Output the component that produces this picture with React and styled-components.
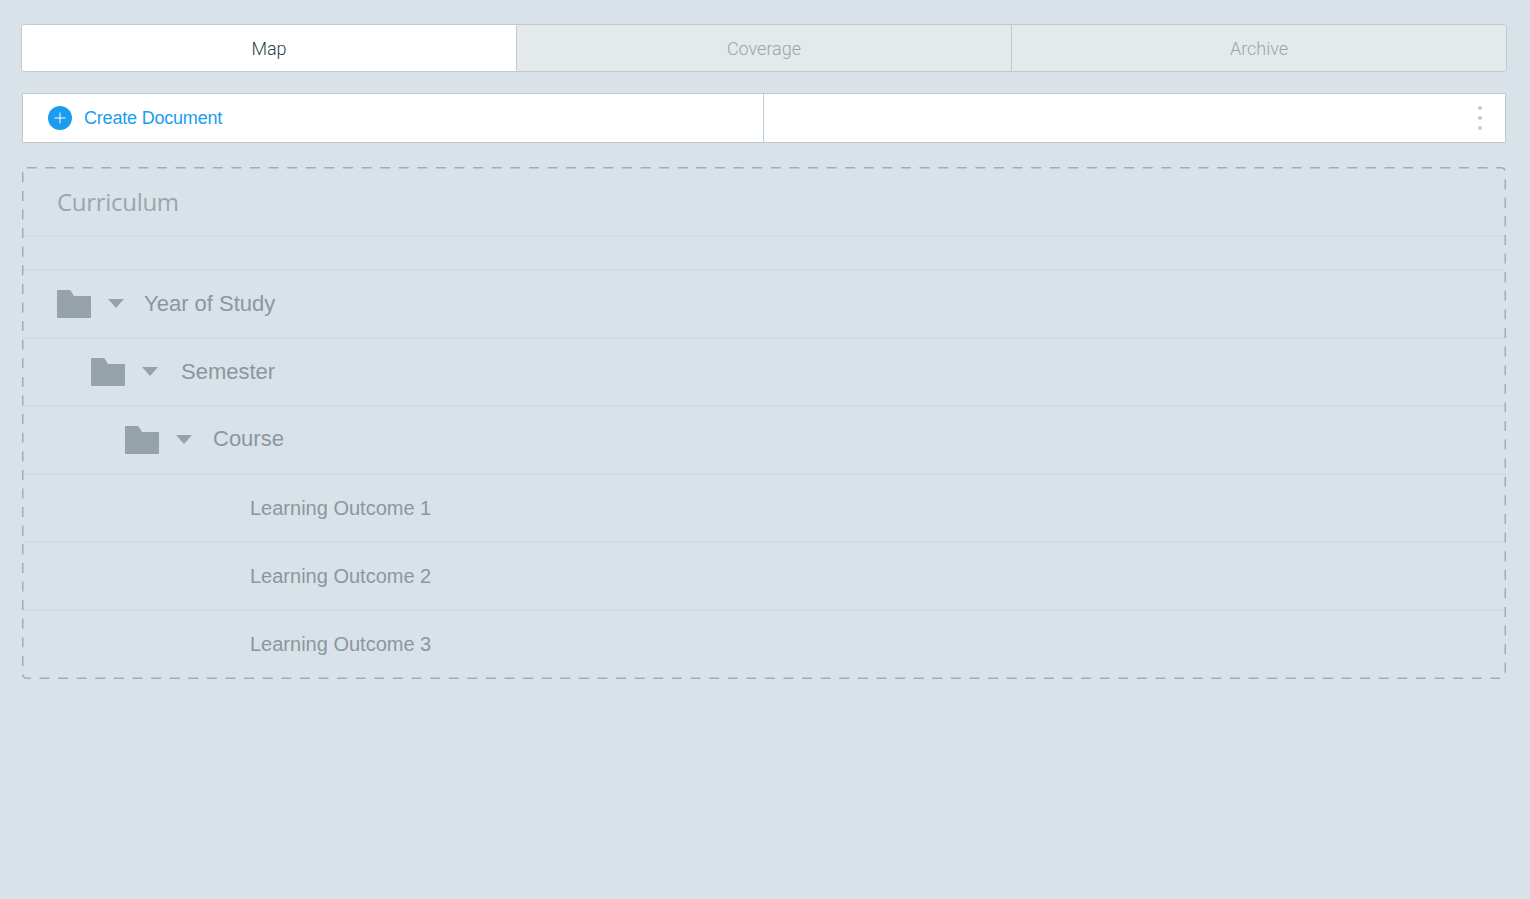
import React from "react";
import styled, { createGlobalStyle } from "styled-components";

const GlobalStyle = createGlobalStyle`
  html, body {
    margin: 0;
    padding: 0;
    background: #d9e2e9;
    font-family: "Liberation Sans", Arial, sans-serif;
  }
  * {
    box-sizing: border-box;
  }
`;

const Page = styled.div`
  min-height: 899px;
  padding: 24px 23px 0 21px;
  background: #d9e2e9;
`;

const Tabs = styled.div`
  display: flex;
  height: 48px;
  border: 1px solid #bfcad0;
  border-radius: 4px;
  overflow: hidden;
`;

const Tab = styled.div`
  flex: 1;
  display: flex;
  align-items: center;
  justify-content: center;
  font-family: Roboto, sans-serif;
  font-weight: 300;
  font-size: 18px;
  letter-spacing: 0;
  color: ${(p) => (p.$active ? "#2d3e48" : "#9aa5a9")};
  background: ${(p) => (p.$active ? "#ffffff" : "#e4eaec")};
  & + & {
    border-left: 1px solid #bfcad0;
  }
`;

const Toolbar = styled.div`
  display: flex;
  height: 50px;
  margin: 21px 0 24px 1px;
  width: 1484px;
  background: #ffffff;
  border: 1px solid #bfcad0;
`;

const ToolbarLeft = styled.div`
  width: 741px;
  display: flex;
  align-items: center;
  gap: 12px;
  padding-left: 25px;
  border-right: 1px solid #bfcad0;
`;

const ToolbarRight = styled.div`
  flex: 1;
  display: flex;
  align-items: center;
  justify-content: flex-end;
  padding-right: 23px;
`;

const PlusCircle = styled.svg`
  width: 24px;
  height: 24px;
  flex: none;
`;

const CreateLabel = styled.span`
  font-size: 18px;
  color: #1b9cef;
  letter-spacing: -0.2px;
`;

const Dots = styled.div`
  display: flex;
  flex-direction: column;
  gap: 6px;
`;

const Dot = styled.span`
  width: 4px;
  height: 4px;
  border-radius: 50%;
  background: #bfcad3;
`;

const Board = styled.div`
  position: relative;
  width: 1484px;
  height: 512px;
  margin-left: 1px;
`;

const DashedFrame = styled.svg`
  position: absolute;
  inset: 0;
  width: 100%;
  height: 100%;
  pointer-events: none;
`;

const DashedRect = styled.rect`
  x: 0.75px;
  y: 0.75px;
  width: calc(100% - 1.5px);
  height: calc(100% - 1.5px);
  rx: 4px;
  fill: none;
  stroke: #a2adb3;
  stroke-width: 1.5px;
  stroke-dasharray: 10 8.6;
`;

const Heading = styled.div`
  height: 70px;
  padding: 19px 0 0 35px;
  font-family: "Open Sans", sans-serif;
  font-size: 24px;
  line-height: 32px;
  letter-spacing: -0.3px;
  color: #9aa6ac;
  border-bottom: 2px solid #d2dde3;
`;

const Spacer = styled.div`
  height: 34px;
  border-bottom: 2px solid #d2dde3;
`;

const Row = styled.div`
  display: flex;
  align-items: center;
  height: 68px;
  padding-left: ${(p) => p.$indent}px;
  border-bottom: 2px solid ${(p) => (p.$last ? "transparent" : "#d2dde3")};
`;

const FolderIcon = styled.svg`
  width: 34px;
  height: 28px;
  flex: none;
`;

const Caret = styled.span`
  flex: none;
  width: 0;
  height: 0;
  margin: 0 0 1px 17px;
  border-left: 8.5px solid transparent;
  border-right: 8.5px solid transparent;
  border-top: 9px solid #96a2a9;
`;

const FolderLabel = styled.span`
  margin-left: ${(p) => p.$gap}px;
  margin-bottom: ${(p) => p.$lift}px;
  font-size: 22px;
  color: #8b979e;
`;

const OutcomeLabel = styled.span`
  font-size: 20px;
  color: #8b979e;
`;

const tabs = ["Map", "Coverage", "Archive"];

const folders = [
  { label: "Year of Study", indent: 35, gap: 20, lift: 0 },
  { label: "Semester", indent: 69, gap: 23, lift: 0 },
  { label: "Course", indent: 103, gap: 21, lift: 2 },
];

const outcomes = ["Learning Outcome 1", "Learning Outcome 2", "Learning Outcome 3"];

const Folder = () => (
  <FolderIcon viewBox="0 0 34 28">
    <path
      d="M1 0h10.500c1.300 0 2 .5 2.700 1.400L17 6h16c.6 0 1 .4 1 1v20c0 .6-.4 1-1 1H1c-.6 0-1-.4-1-1V1c0-.6.4-1 1-1z"
      fill="#96a2a9"
    />
  </FolderIcon>
);

const App = () => {
  return (
    <Page>
      <GlobalStyle />
      <Tabs>
        {tabs.map((tab, i) => (
          <Tab key={tab} $active={i === 0}>
            {tab}
          </Tab>
        ))}
      </Tabs>
      <Toolbar>
        <ToolbarLeft>
          <PlusCircle viewBox="0 0 24 24">
            <circle cx="12" cy="12" r="12" fill="#1b9cef" />
            <path d="M12 6.500v11M6.500 12h11" stroke="#ffffff" strokeWidth="1" />
          </PlusCircle>
          <CreateLabel>Create Document</CreateLabel>
        </ToolbarLeft>
        <ToolbarRight>
          <Dots>
            <Dot />
            <Dot />
            <Dot />
          </Dots>
        </ToolbarRight>
      </Toolbar>
      <Board>
        <DashedFrame>
          <DashedRect />
        </DashedFrame>
        <Heading>Curriculum</Heading>
        <Spacer />
        {folders.map((f) => (
          <Row key={f.label} $indent={f.indent}>
            <Folder />
            <Caret />
            <FolderLabel $gap={f.gap} $lift={f.lift}>
              {f.label}
            </FolderLabel>
          </Row>
        ))}
        {outcomes.map((o, i) => (
          <Row key={o} $indent={228} $last={i === outcomes.length - 1}>
            <OutcomeLabel>{o}</OutcomeLabel>
          </Row>
        ))}
      </Board>
    </Page>
  );
};

export default App;
